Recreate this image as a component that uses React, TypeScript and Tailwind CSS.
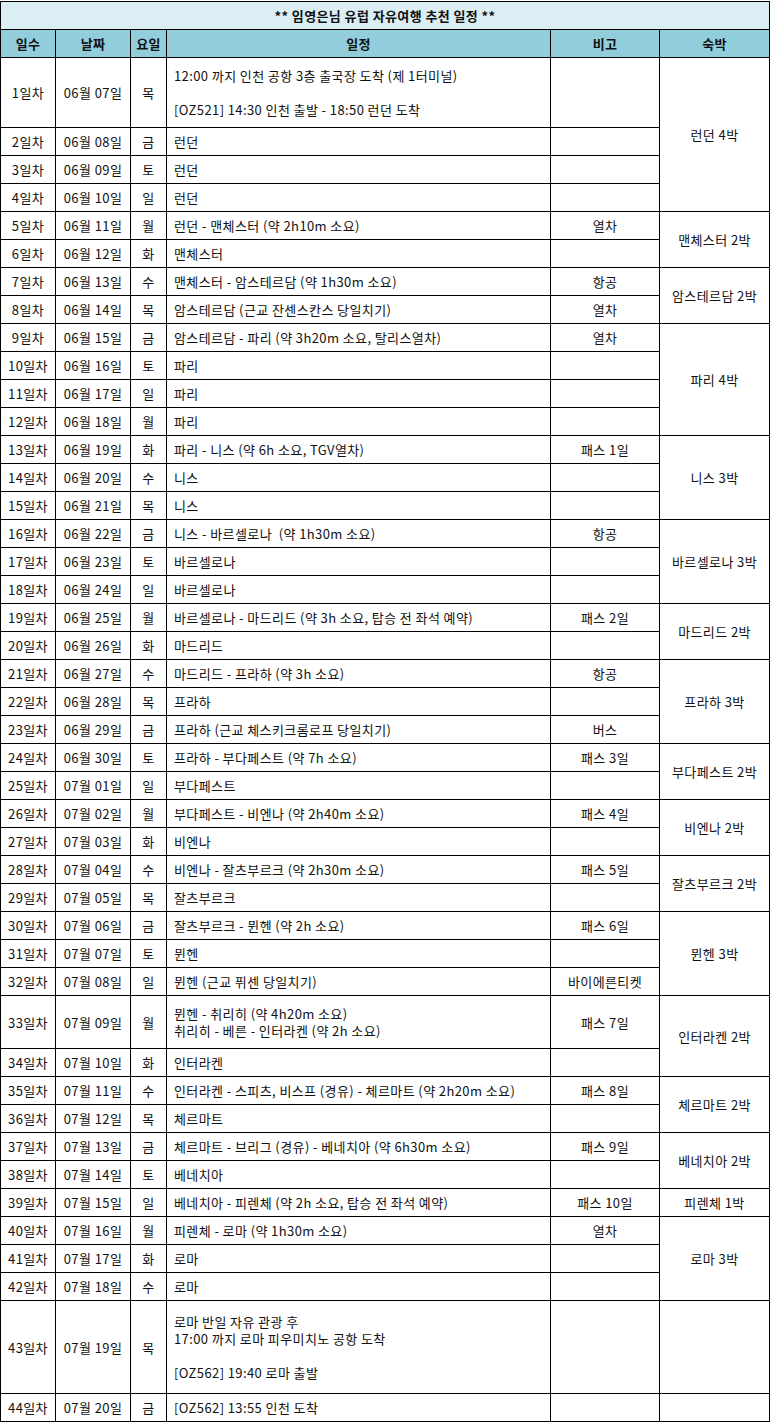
type Row = {
  day: string;
  date: string;
  wd: string;
  plan: string[];
  note?: string;
  stay?: { text: string; span: number };
  h?: number;
};

const rows: Row[] = [
  { day: "1일차", date: "06월 07일", wd: "목", plan: ["12:00 까지 인천 공항 3층 출국장 도착 (제 1터미널)", "", "[OZ521] 14:30 인천 출발 - 18:50 런던 도착"], stay: { text: "런던 4박", span: 4 }, h: 70 },
  { day: "2일차", date: "06월 08일", wd: "금", plan: ["런던"] },
  { day: "3일차", date: "06월 09일", wd: "토", plan: ["런던"] },
  { day: "4일차", date: "06월 10일", wd: "일", plan: ["런던"] },
  { day: "5일차", date: "06월 11일", wd: "월", plan: ["런던 - 맨체스터 (약 2h10m 소요)"], note: "열차", stay: { text: "맨체스터 2박", span: 2 } },
  { day: "6일차", date: "06월 12일", wd: "화", plan: ["맨체스터"] },
  { day: "7일차", date: "06월 13일", wd: "수", plan: ["맨체스터 - 암스테르담 (약 1h30m 소요)"], note: "항공", stay: { text: "암스테르담 2박", span: 2 } },
  { day: "8일차", date: "06월 14일", wd: "목", plan: ["암스테르담 (근교 잔센스칸스 당일치기)"], note: "열차" },
  { day: "9일차", date: "06월 15일", wd: "금", plan: ["암스테르담 - 파리 (약 3h20m 소요, 탈리스열차)"], note: "열차", stay: { text: "파리 4박", span: 4 } },
  { day: "10일차", date: "06월 16일", wd: "토", plan: ["파리"] },
  { day: "11일차", date: "06월 17일", wd: "일", plan: ["파리"] },
  { day: "12일차", date: "06월 18일", wd: "월", plan: ["파리"] },
  { day: "13일차", date: "06월 19일", wd: "화", plan: ["파리 - 니스 (약 6h 소요, TGV열차)"], note: "패스 1일", stay: { text: "니스 3박", span: 3 } },
  { day: "14일차", date: "06월 20일", wd: "수", plan: ["니스"] },
  { day: "15일차", date: "06월 21일", wd: "목", plan: ["니스"] },
  { day: "16일차", date: "06월 22일", wd: "금", plan: ["니스 - 바르셀로나 \u00a0(약 1h30m 소요)"], note: "항공", stay: { text: "바르셀로나 3박", span: 3 } },
  { day: "17일차", date: "06월 23일", wd: "토", plan: ["바르셀로나"] },
  { day: "18일차", date: "06월 24일", wd: "일", plan: ["바르셀로나"] },
  { day: "19일차", date: "06월 25일", wd: "월", plan: ["바르셀로나 - 마드리드 (약 3h 소요, 탑승 전 좌석 예약)"], note: "패스 2일", stay: { text: "마드리드 2박", span: 2 } },
  { day: "20일차", date: "06월 26일", wd: "화", plan: ["마드리드"] },
  { day: "21일차", date: "06월 27일", wd: "수", plan: ["마드리드 - 프라하 (약 3h 소요)"], note: "항공", stay: { text: "프라하 3박", span: 3 } },
  { day: "22일차", date: "06월 28일", wd: "목", plan: ["프라하"] },
  { day: "23일차", date: "06월 29일", wd: "금", plan: ["프라하 (근교 체스키크롬로프 당일치기)"], note: "버스" },
  { day: "24일차", date: "06월 30일", wd: "토", plan: ["프라하 - 부다페스트 (약 7h 소요)"], note: "패스 3일", stay: { text: "부다페스트 2박", span: 2 } },
  { day: "25일차", date: "07월 01일", wd: "일", plan: ["부다페스트"] },
  { day: "26일차", date: "07월 02일", wd: "월", plan: ["부다페스트 - 비엔나 (약 2h40m 소요)"], note: "패스 4일", stay: { text: "비엔나 2박", span: 2 } },
  { day: "27일차", date: "07월 03일", wd: "화", plan: ["비엔나"] },
  { day: "28일차", date: "07월 04일", wd: "수", plan: ["비엔나 - 잘츠부르크 (약 2h30m 소요)"], note: "패스 5일", stay: { text: "잘츠부르크 2박", span: 2 } },
  { day: "29일차", date: "07월 05일", wd: "목", plan: ["잘츠부르크"] },
  { day: "30일차", date: "07월 06일", wd: "금", plan: ["잘츠부르크 - 뮌헨 (약 2h 소요)"], note: "패스 6일", stay: { text: "뮌헨 3박", span: 3 } },
  { day: "31일차", date: "07월 07일", wd: "토", plan: ["뮌헨"] },
  { day: "32일차", date: "07월 08일", wd: "일", plan: ["뮌헨 (근교 퓌센 당일치기)"], note: "바이에른티켓" },
  { day: "33일차", date: "07월 09일", wd: "월", plan: ["뮌헨 - 취리히 (약 4h20m 소요)", "취리히 - 베른 - 인터라켄 (약 2h 소요)"], note: "패스 7일", stay: { text: "인터라켄 2박", span: 2 }, h: 53 },
  { day: "34일차", date: "07월 10일", wd: "화", plan: ["인터라켄"] },
  { day: "35일차", date: "07월 11일", wd: "수", plan: ["인터라켄 - 스피츠, 비스프 (경유) - 체르마트 (약 2h20m 소요)"], note: "패스 8일", stay: { text: "체르마트 2박", span: 2 } },
  { day: "36일차", date: "07월 12일", wd: "목", plan: ["체르마트"] },
  { day: "37일차", date: "07월 13일", wd: "금", plan: ["체르마트 - 브리그 (경유) - 베네치아 (약 6h30m 소요)"], note: "패스 9일", stay: { text: "베네치아 2박", span: 2 } },
  { day: "38일차", date: "07월 14일", wd: "토", plan: ["베네치아"] },
  { day: "39일차", date: "07월 15일", wd: "일", plan: ["베네치아 - 피렌체 (약 2h 소요, 탑승 전 좌석 예약)"], note: "패스 10일", stay: { text: "피렌체 1박", span: 1 } },
  { day: "40일차", date: "07월 16일", wd: "월", plan: ["피렌체 - 로마 (약 1h30m 소요)"], note: "열차", stay: { text: "로마 3박", span: 3 } },
  { day: "41일차", date: "07월 17일", wd: "화", plan: ["로마"] },
  { day: "42일차", date: "07월 18일", wd: "수", plan: ["로마"] },
  { day: "43일차", date: "07월 19일", wd: "목", plan: ["로마 반일 자유 관광 후", "17:00 까지 로마 피우미치노 공항 도착", "", "[OZ562] 19:40 로마 출발"], stay: { text: "", span: 1 }, h: 93 },
  { day: "44일차", date: "07월 20일", wd: "금", plan: ["[OZ562] 13:55 인천 도착"], stay: { text: "", span: 1 } },
];

const cell = "border border-black align-middle p-0";

export default function App() {
  return (
    <div className="bg-white pt-px text-[13px] leading-[17px] tracking-[0.4px] text-[#111] [font-family:'Noto_Sans_CJK_KR','Noto_Sans',sans-serif]">
      <table className="w-[769px] table-fixed border-collapse">
        <colgroup>
          <col className="w-[55px]" />
          <col className="w-[75px]" />
          <col className="w-[36px]" />
          <col className="w-[384px]" />
          <col className="w-[109px]" />
          <col className="w-[110px]" />
        </colgroup>
        <thead>
          <tr className="h-[28px]">
            <th colSpan={6} className={`${cell} bg-[#daeef3] text-center font-bold`}>
              ** 임영은님 유럽 자유여행 추천 일정 **
            </th>
          </tr>
          <tr className="h-[28px] bg-[#92cddc] font-bold">
            <th className={`${cell} text-center`}>일수</th>
            <th className={`${cell} text-center`}>날짜</th>
            <th className={`${cell} text-center`}>요일</th>
            <th className={`${cell} text-center`}>일정</th>
            <th className={`${cell} text-center`}>비고</th>
            <th className={`${cell} text-center`}>숙박</th>
          </tr>
        </thead>
        <tbody>
          {rows.map((r) => (
            <tr key={r.day} style={{ height: r.h ?? 28 }}>
              <td className={`${cell} text-center`}>{r.day}</td>
              <td className={`${cell} text-center`}>{r.date}</td>
              <td className={`${cell} text-center`}>{r.wd}</td>
              <td className={`${cell} whitespace-nowrap pl-[7px] text-left`}>
                {r.plan.map((line, i) => (
                  <div key={i} className="h-[17px]">
                    {line}
                  </div>
                ))}
              </td>
              <td className={`${cell} text-center`}>{r.note ?? ""}</td>
              {r.stay && (
                <td rowSpan={r.stay.span} className={`${cell} text-center`}>
                  {r.stay.text}
                </td>
              )}
            </tr>
          ))}
        </tbody>
      </table>
    </div>
  );
}
